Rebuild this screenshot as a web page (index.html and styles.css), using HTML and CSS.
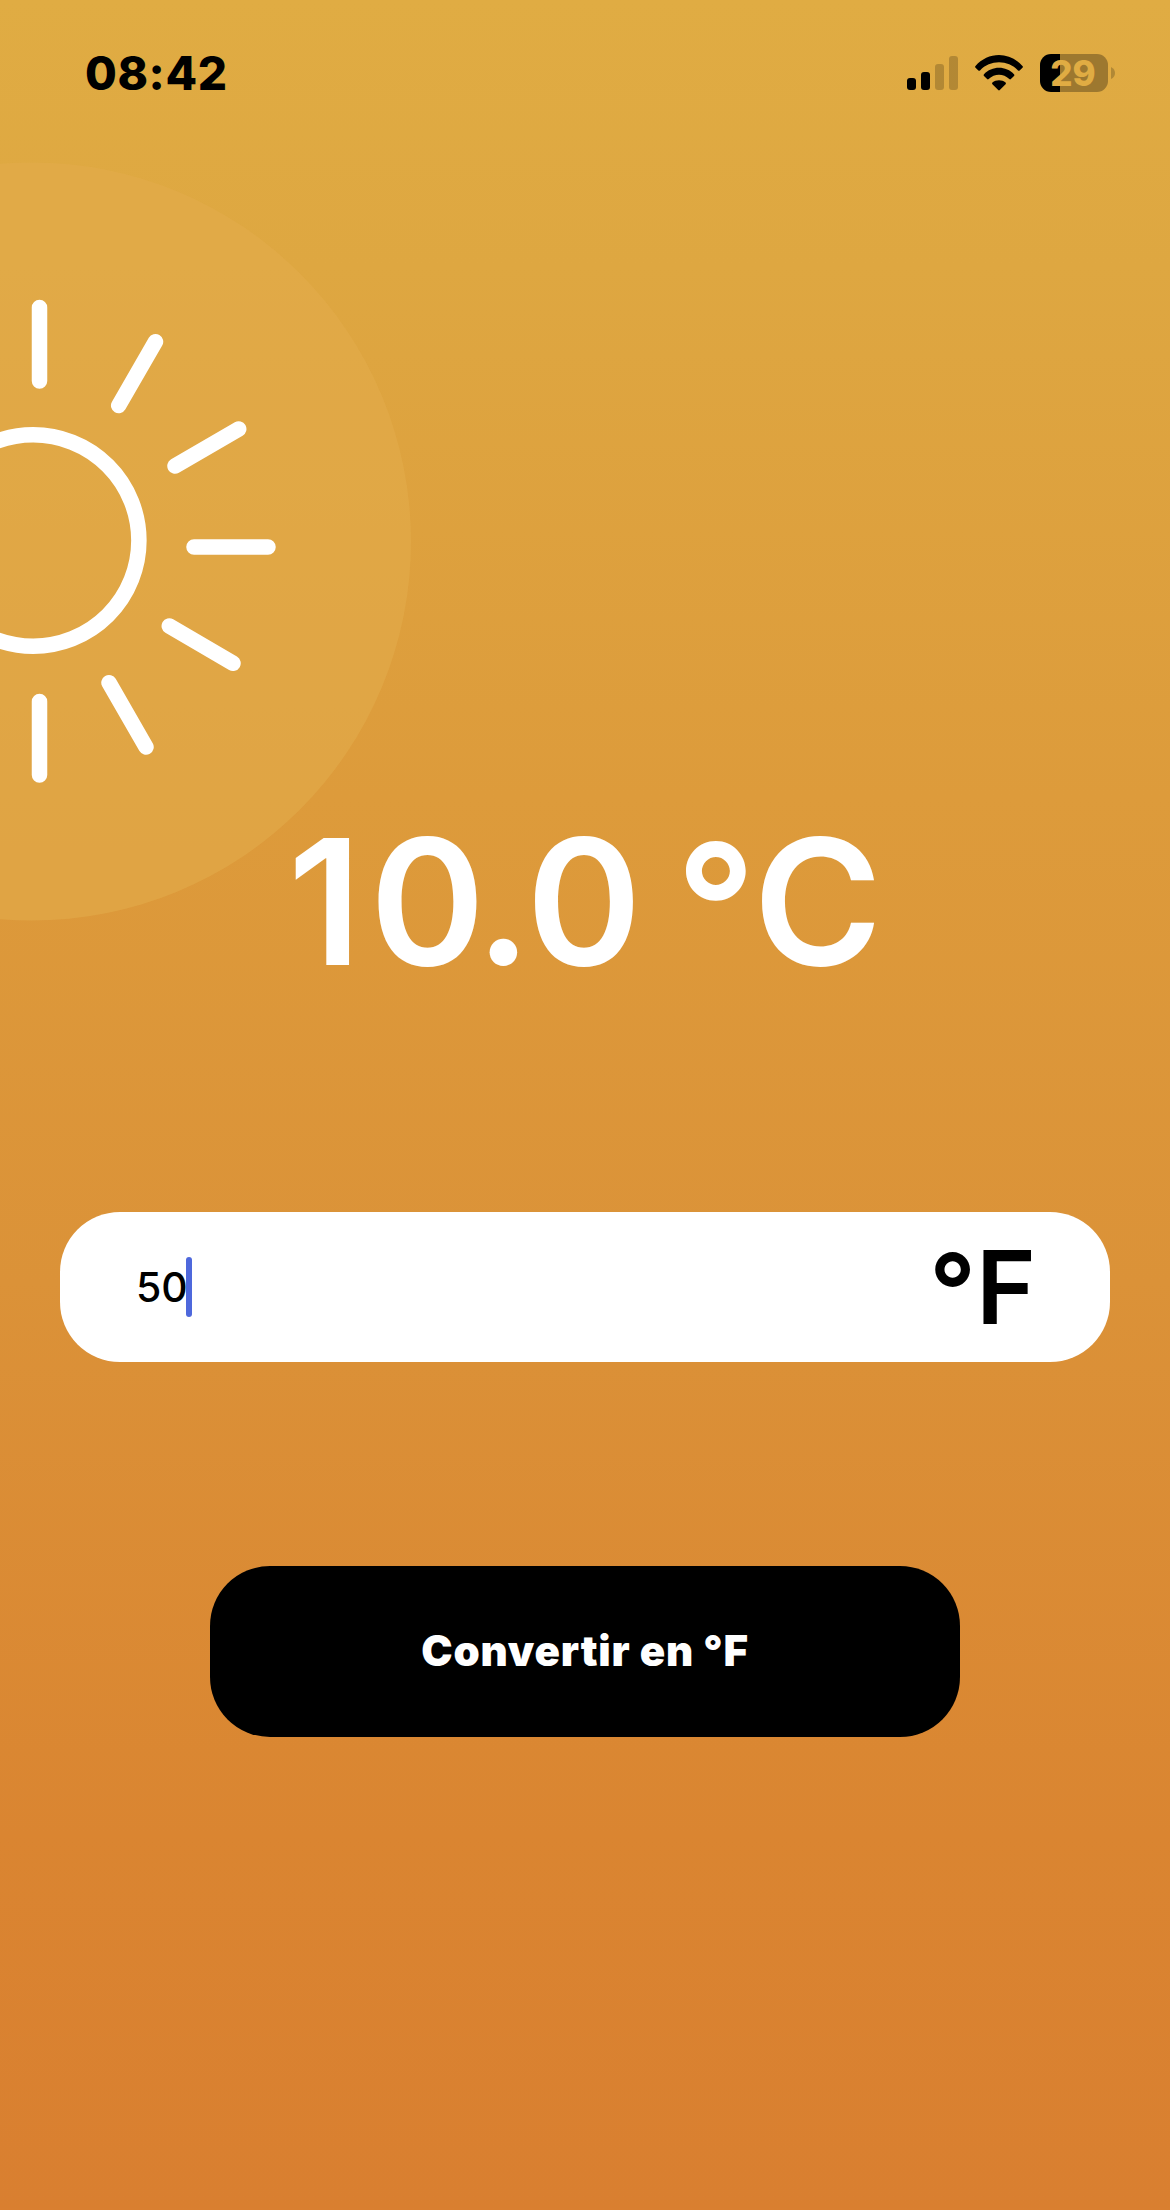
FILE: index.html
```html
<!DOCTYPE html>
<html lang="fr">
<head>
<meta charset="utf-8">
<title>Convertisseur</title>
<link rel="stylesheet" href="styles.css">
</head>
<body>
<div class="screen">
  <svg class="sun" width="420" height="940" viewBox="0 0 420 940" aria-hidden="true">
    <circle class="halo" cx="32" cy="541.5" r="379"/>
    <g class="rays">
      <circle cx="33.2" cy="540.5" r="105.7"/>
      <path d="M39.5 307.5V381M155.5 341.7L118.7 405.5M238.7 429L175 466M194 547H268M169.3 626L233 663.3M109 682.7L146 747M39.5 701.5V775"/>
    </g>
  </svg>
  <header class="status">
    <div class="clock">08:42</div>
    <div class="indicators">
      <svg class="signal" width="52" height="36" viewBox="0 0 52 36">
        <rect x="0" y="24" width="9" height="12" rx="3"/>
        <rect x="14" y="18" width="9" height="18" rx="3"/>
        <rect class="dim" x="28" y="10" width="9" height="26" rx="3"/>
        <rect class="dim" x="42" y="2" width="9" height="34" rx="3"/>
      </svg>
      <svg class="wifi" width="50" height="37" viewBox="0 0 50 37">
        <path d="M1.3 12.2C14-2.8 36-2.8 48.7 12.2Q49.2 13 48.5 13.8L45.6 16.5Q44.8 17.2 44 16.4C34 5.6 16 5.6 6 16.4Q5.2 17.2 4.4 16.5L1.5 13.8Q.8 13 1.3 12.2Z"/>
        <path d="M9.8 20.4C18 11.6 32 11.6 40.2 20.4Q40.8 21.2 40 22L36.9 25Q36.1 25.8 35.3 25C29.5 19.2 20.5 19.2 14.7 25Q13.9 25.8 13.1 25L10 22Q9.2 21.2 9.8 20.4Z"/>
        <path d="M18.4 28.6C22 25.4 28 25.4 31.6 28.6Q32.4 29.4 31.6 30.2L25.8 36Q25 36.8 24.2 36L18.4 30.2Q17.6 29.4 18.4 28.6Z"/>
      </svg>
      <div class="battery"><span class="level">29</span></div>
      <svg class="cap" width="4" height="12" viewBox="0 0 4 12"><path d="M0 0Q4 2 4 6Q4 10 0 12Z"/></svg>
    </div>
  </header>
  <main class="converter">
    <div class="result"><span class="one">1</span><span class="zero">0</span><span class="point">.</span>0<span class="gap"> </span><span class="deg">°</span>C</div>
    <div class="field">
      <span class="value">50</span><span class="caret"></span>
      <span class="unit"><span class="deg">°</span>F</span>
    </div>
    <button class="convert">Convertir en °F</button>
  </main>
</div>
</body>
</html>
```
FILE: styles.css
```css
* { box-sizing: border-box; }
body { margin: 0; font-family: Inter, "Liberation Sans", sans-serif; }
.screen {
  position: relative;
  width: 1170px;
  height: 2210px;
  overflow: hidden;
  background: linear-gradient(#e0ac43 0%, #dea741 12%, #dd9b3b 36%, #db9238 58%, #da8531 83%, #d97f30 100%);
}
.sun { position: absolute; left: 0; top: 0; }
.halo { fill: #e3ac4b; fill-opacity: .6; }
.rays { fill: none; stroke: #fff; stroke-width: 15.5; stroke-linecap: round; }
.status {
  position: relative;
  display: flex;
  justify-content: space-between;
  height: 120px;
  padding: 54px 55px 0 85px;
}
.clock { height: 38px; line-height: 38px; font-size: 46px; font-weight: 800; letter-spacing: .6px; }
.indicators { display: flex; }
.signal { margin-right: 15px; }
.dim { opacity: .2; }
.wifi { margin-right: 16px; }
.battery {
  width: 68px;
  height: 38px;
  border-radius: 11px;
  background: linear-gradient(90deg, #000 20px, #9d782f 20px);
  text-align: center;
}
.level { display: block; margin-left: -2px; line-height: 38px; font-size: 35px; font-weight: 800; color: #e0ac43; }
.cap { margin: 13px 0 0 3px; fill: #b18835; }
.converter { position: relative; display: flex; flex-direction: column; align-items: center; }
.result {
  height: 220px;
  margin-top: 671px;
  line-height: 220px;
  font-size: 175px;
  font-weight: 600;
  color: #fff;
  white-space: pre;
}
.one { letter-spacing: 8px; }
.zero { letter-spacing: -5px; }
.point { letter-spacing: -5px; }
.gap { letter-spacing: -10px; }
.deg { position: relative; top: .025em; }
.field {
  display: flex;
  align-items: center;
  width: 1050px;
  height: 150px;
  margin-top: 201px;
  padding: 0 74px 0 76px;
  border-radius: 60px;
  background: #fff;
}
.value { font-size: 41px; font-weight: 550; }
.caret { width: 6px; height: 60px; margin-left: -2px; border-radius: 3px; background: #4e68dc; }
.unit { margin-left: auto; font-size: 102px; font-weight: 600; line-height: 150px; }
.convert {
  width: 750px;
  height: 171px;
  margin-top: 204px;
  padding: 0 0 2px;
  border: 0;
  border-radius: 60px;
  background: #000;
  font: 900 42px Inter, "Liberation Sans", sans-serif;
  letter-spacing: .8px;
  color: #fff;
}
```
